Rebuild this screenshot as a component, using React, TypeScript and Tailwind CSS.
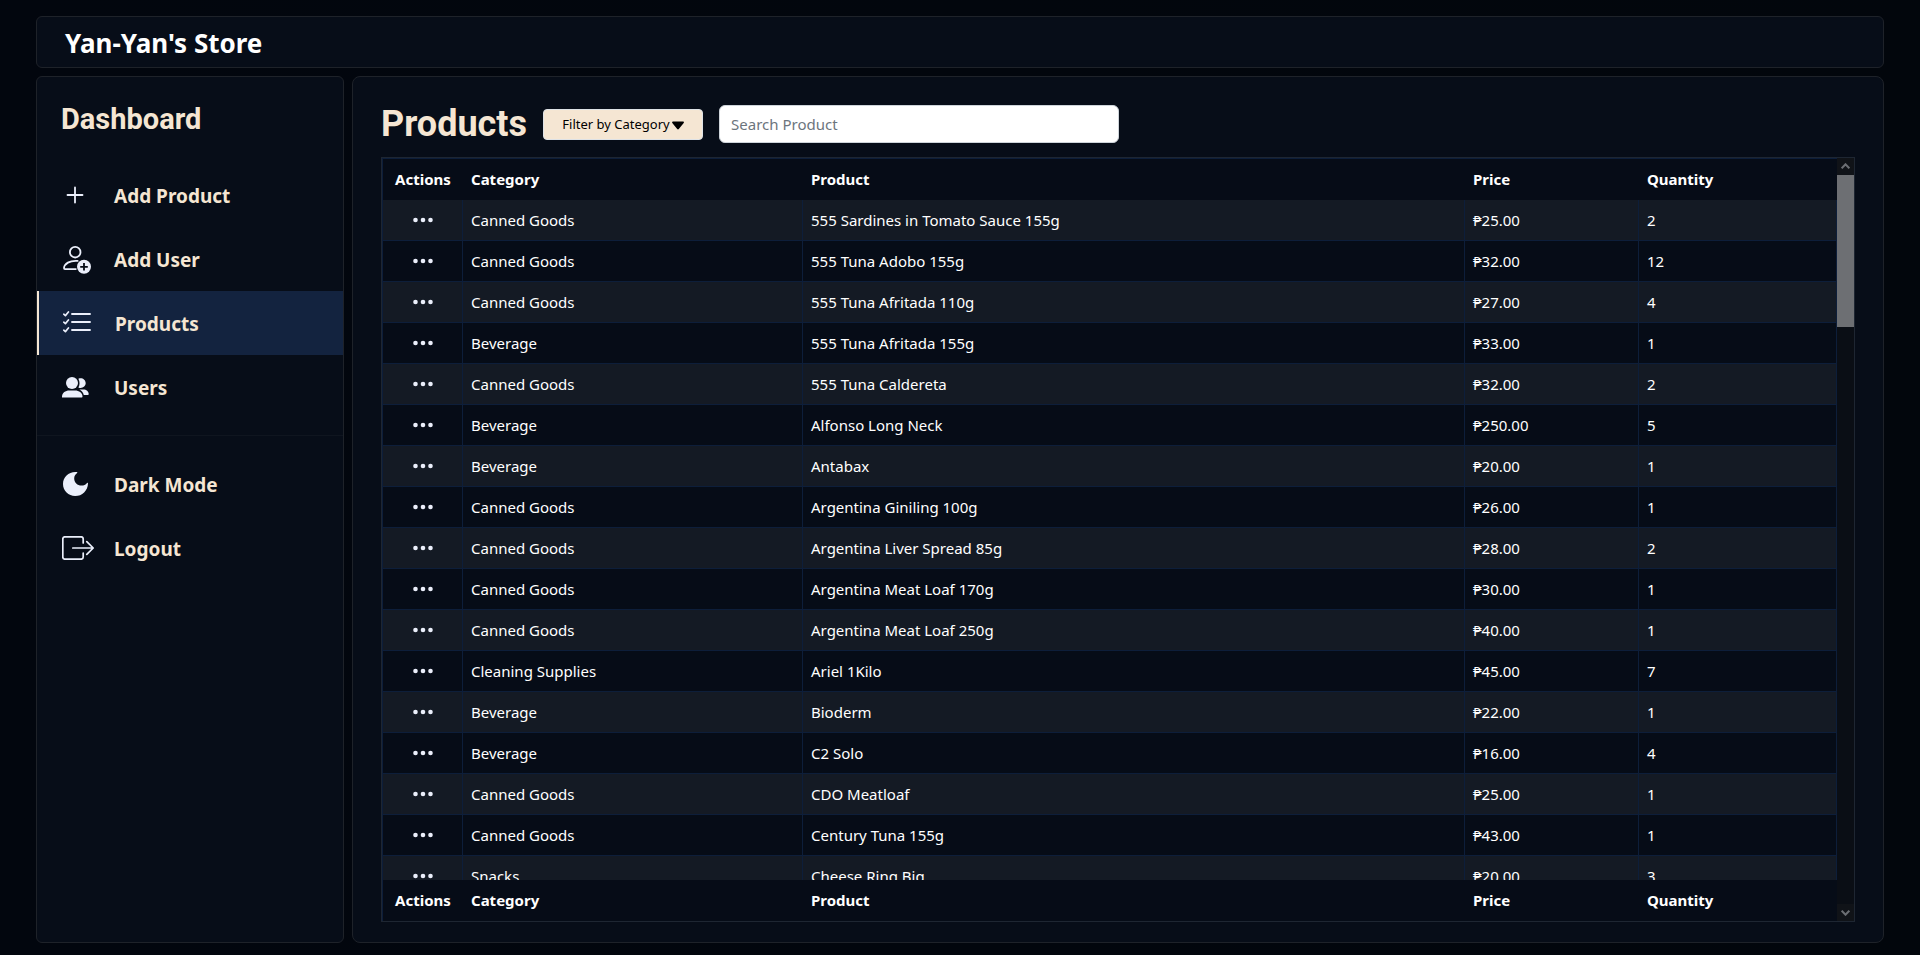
import { ReactNode } from "react";

interface Product {
  category: string;
  name: string;
  price: number;
  quantity: number;
}

const products: Product[] = [
  { category: "Canned Goods", name: "555 Sardines in Tomato Sauce 155g", price: 25, quantity: 2 },
  { category: "Canned Goods", name: "555 Tuna Adobo 155g", price: 32, quantity: 12 },
  { category: "Canned Goods", name: "555 Tuna Afritada 110g", price: 27, quantity: 4 },
  { category: "Beverage", name: "555 Tuna Afritada 155g", price: 33, quantity: 1 },
  { category: "Canned Goods", name: "555 Tuna Caldereta", price: 32, quantity: 2 },
  { category: "Beverage", name: "Alfonso Long Neck", price: 250, quantity: 5 },
  { category: "Beverage", name: "Antabax", price: 20, quantity: 1 },
  { category: "Canned Goods", name: "Argentina Giniling 100g", price: 26, quantity: 1 },
  { category: "Canned Goods", name: "Argentina Liver Spread 85g", price: 28, quantity: 2 },
  { category: "Canned Goods", name: "Argentina Meat Loaf 170g", price: 30, quantity: 1 },
  { category: "Canned Goods", name: "Argentina Meat Loaf 250g", price: 40, quantity: 1 },
  { category: "Cleaning Supplies", name: "Ariel 1Kilo", price: 45, quantity: 7 },
  { category: "Beverage", name: "Bioderm", price: 22, quantity: 1 },
  { category: "Beverage", name: "C2 Solo", price: 16, quantity: 4 },
  { category: "Canned Goods", name: "CDO Meatloaf", price: 25, quantity: 1 },
  { category: "Canned Goods", name: "Century Tuna 155g", price: 43, quantity: 1 },
  { category: "Snacks", name: "Cheese Ring Big", price: 20, quantity: 3 },
];

const columns = ["Actions", "Category", "Product", "Price", "Quantity"];

const PlusIcon = () => (
  <svg width="26" height="26" viewBox="0 0 26 26" fill="none" stroke="currentColor" strokeWidth="1.8" aria-hidden="true">
    <path d="M13 5.5v15M5.5 13h15" strokeLinecap="round" />
  </svg>
);

const AddUserIcon = () => (
  <svg width="30" height="32" viewBox="-1 -3 30 32" fill="none" stroke="currentColor" strokeWidth="1.8" aria-hidden="true">
    <circle cx="12.2" cy="6.2" r="5.3" />
    <path d="M14.6 14.9C6.5 14.3 1.4 17.7 1 22c0 .7.3 1.1 1 1.1h10.8" strokeLinecap="round" />
    <circle cx="21" cy="20.8" r="7" fill="currentColor" stroke="none" />
    <path d="M21 17v7.6M17.2 20.8h7.6" stroke="#070d18" />
  </svg>
);

const ListIcon = () => (
  <svg width="28" height="24" viewBox="0 0 28 24" fill="none" stroke="currentColor" aria-hidden="true">
    <path d="M9 3h18M9 11h18M9 19h18" strokeWidth="1.9" strokeLinecap="round" />
    <path
      d="m.8 3.2 1.6 1.4L5.4 1M.8 11.2l1.6 1.4L5.4 9M.8 19.2l1.6 1.4L5.4 17"
      strokeWidth="1.7"
      strokeLinecap="round"
      strokeLinejoin="round"
    />
  </svg>
);

const UsersIcon = () => (
  <svg width="27" height="21" viewBox="0 0 27 21" fill="currentColor" aria-hidden="true">
    <circle cx="10" cy="6.1" r="6" />
    <path d="M0 20.5v-1c0-3.8 3.6-6 7.2-6h6c3.6 0 7.3 2.2 7.3 6 0 .6-.4 1-1 1z" />
    <path d="M16.4 1.7c3.3-1.6 7.3.7 7.3 4.4 0 3.6-3.9 6-7.3 4.4 1.5-2.7 1.5-6 0-8.8z" />
    <path d="M17.4 12.6h4c3 0 5.3 2 5.3 4.3 0 .6-.4 1-1 1h-3.9c-.6-2.3-2.1-4.1-4.4-5.3z" />
  </svg>
);

const MoonIcon = () => (
  <svg width="26" height="24" viewBox="-1 0 26 24" fill="currentColor" aria-hidden="true">
    <path d="M13.8.1C6.3-.8 0 5 0 12c0 6.7 5.5 12 12.2 12 7 0 12.6-5.5 12.8-12.6 0-.7-.7-.9-1-.4-1.4 1.8-3.3 2.6-5.4 2.6-4.3 0-7.4-3.3-7.4-7.2 0-2.2.9-3.9 2.9-5.4.5-.4.3-.8-.3-.9z" />
  </svg>
);

const LogoutIcon = () => (
  <svg width="32" height="24" viewBox="0 0 32 24" fill="none" stroke="currentColor" strokeWidth="1.7" aria-hidden="true">
    <path
      d="M21.2 7V3c0-1.3-.8-2.2-2.2-2.2H3C1.6.8.8 1.7.8 3v18c0 1.3.8 2.2 2.2 2.2h16c1.4 0 2.2-.9 2.2-2.2v-4"
      strokeLinecap="round"
    />
    <path d="M10.8 12H31M24.8 5.6 31.2 12l-6.4 6.4" strokeLinecap="round" strokeLinejoin="round" />
  </svg>
);

interface NavItemProps {
  icon: ReactNode;
  label: string;
  active?: boolean;
}

const NavItem = ({ icon, label, active }: NavItemProps) => (
  <li>
    <a
      href="#"
      aria-current={active ? "page" : undefined}
      className={
        active
          ? "flex h-16 items-center border-l-2 border-[#f5e6d3] bg-[#13233f] pl-6"
          : "flex h-16 items-center pl-[25px]"
      }
    >
      <span className="w-[52px] shrink-0 text-[#ebeffb]">{icon}</span>
      <span className="pt-[2px] text-[19px] leading-7 font-bold text-[#f5e6d3]">{label}</span>
    </a>
  </li>
);

const HeadingCells = () => (
  <>
    {columns.map((column) => (
      <th
        key={column}
        scope="col"
        className="h-[41px] px-2 pb-[2px] text-left font-bold first:text-center"
      >
        {column}
      </th>
    ))}
  </>
);

const ProductRow = ({ category, name, price, quantity }: Product) => (
  <tr className="odd:bg-[#141a24] [&>td]:h-[41px] [&>td]:border-r [&>td]:border-b [&>td]:border-[#0d1e3a] [&>td]:px-2">
    <td>
      <button type="button" aria-label={`Actions for ${name}`} className="flex h-6 w-full items-center justify-center">
        <svg width="20" height="6" viewBox="0 0 20 6" fill="#ebeffb" aria-hidden="true">
          <circle cx="2.5" cy="3" r="2.3" />
          <circle cx="10" cy="3" r="2.3" />
          <circle cx="17.5" cy="3" r="2.3" />
        </svg>
      </button>
    </td>
    <td>{category}</td>
    <td>{name}</td>
    <td>₱{price.toFixed(2)}</td>
    <td>{quantity}</td>
  </tr>
);

const Scrollbar = () => (
  <div aria-hidden="true" className="flex w-[17px] shrink-0 flex-col bg-[#0a0e15]">
    <div className="flex h-[17px] items-center justify-center bg-[#101318]">
      <svg width="9" height="7" viewBox="0 0 9 7" fill="none" stroke="#6b6e73" strokeWidth="2">
        <path d="M.7 5.3l3.8-4 3.8 4" />
      </svg>
    </div>
    <div className="flex-1">
      <div className="h-[152px] bg-[#6d6f73]" />
    </div>
    <div className="flex h-[17px] items-center justify-center bg-[#101318]">
      <svg width="9" height="7" viewBox="0 0 9 7" fill="none" stroke="#6b6e73" strokeWidth="2">
        <path d="M.7 1.7l3.8 4 3.8-4" />
      </svg>
    </div>
  </div>
);

const App = () => {
  return (
    <div className="flex h-screen flex-col gap-2 bg-linear-to-r from-[#02060e] to-[#02060c] px-9 pt-4 pb-3 font-['Noto_Sans',sans-serif] text-white">
      <header className="flex h-[52px] shrink-0 items-center rounded-md border border-[#1e2229] bg-[#070d18] px-7 pt-[2px]">
        <h1 className="text-[26px] leading-8 font-bold">Yan-Yan's Store</h1>
      </header>

      <div className="flex min-h-0 flex-1 gap-2">
        <aside className="w-[308px] shrink-0 rounded-md border border-[#1e2229] bg-[#070d18]">
          <h2 className="flex h-[86px] items-center pl-6 font-['Roboto',sans-serif] text-[29px] font-bold text-[#f5e6d3]">
            Dashboard
          </h2>
          <nav>
            <ul>
              <NavItem icon={<PlusIcon />} label="Add Product" />
              <NavItem icon={<AddUserIcon />} label="Add User" />
              <NavItem icon={<ListIcon />} label="Products" active />
              <NavItem icon={<UsersIcon />} label="Users" />
            </ul>
            <hr className="my-4 border-[#0f151f]" />
            <ul>
              <NavItem icon={<MoonIcon />} label="Dark Mode" />
              <NavItem icon={<LogoutIcon />} label="Logout" />
            </ul>
          </nav>
        </aside>

        <main className="flex min-w-0 flex-1 flex-col rounded-lg border border-[#1e2229] bg-[#070d18] px-7 pt-7 pb-5">
          <div className="mb-[14px] flex h-[38px] items-center gap-4">
            <h2 className="font-['Roboto',sans-serif] text-4xl font-bold text-[#f5e6d3]">
              Products
            </h2>
            <button
              type="button"
              className="flex h-[31px] w-40 items-center justify-center gap-[2px] rounded border border-[#dee2e6] bg-[#f5e6d3] pt-[2px] text-[13px] text-black"
            >
              Filter by Category
              <svg width="12" height="9" viewBox="0 0 12 9" fill="currentColor" aria-hidden="true">
                <path d="M1 .5h10c.8 0 1.2.9.7 1.5L6.8 8c-.4.5-1.2.5-1.6 0L.3 2C-.2 1.4.2.5 1 .5z" />
              </svg>
            </button>
            <input
              type="text"
              aria-label="Search Product"
              placeholder="Search Product"
              className="h-[38px] w-[400px] rounded-md border border-[#ced4da] bg-white px-[11px] text-[15px] text-black placeholder:text-[#6c757d]"
            />
          </div>

          <div className="flex min-h-0 flex-1 border border-[#1e2632]">
            <div className="flex-1 overflow-y-auto border-t border-l border-[#0d1e3a] [scrollbar-width:none]">
              <table className="w-full table-fixed border-separate border-spacing-0 text-[15px] leading-6">
                <colgroup>
                  <col className="w-20" />
                  <col className="w-[340px]" />
                  <col />
                  <col className="w-[174px]" />
                  <col className="w-[198px]" />
                </colgroup>
                <thead className="sticky top-0 z-10 bg-[#060c17]">
                  <tr>
                    <HeadingCells />
                  </tr>
                </thead>
                <tbody className="bg-[#060c17]">
                  {products.map((product) => (
                    <ProductRow key={product.name} {...product} />
                  ))}
                </tbody>
                <tfoot className="sticky bottom-0 z-10 bg-[#060c17]">
                  <tr>
                    <HeadingCells />
                  </tr>
                </tfoot>
              </table>
            </div>
            <Scrollbar />
          </div>
        </main>
      </div>
    </div>
  );
};

export default App;
